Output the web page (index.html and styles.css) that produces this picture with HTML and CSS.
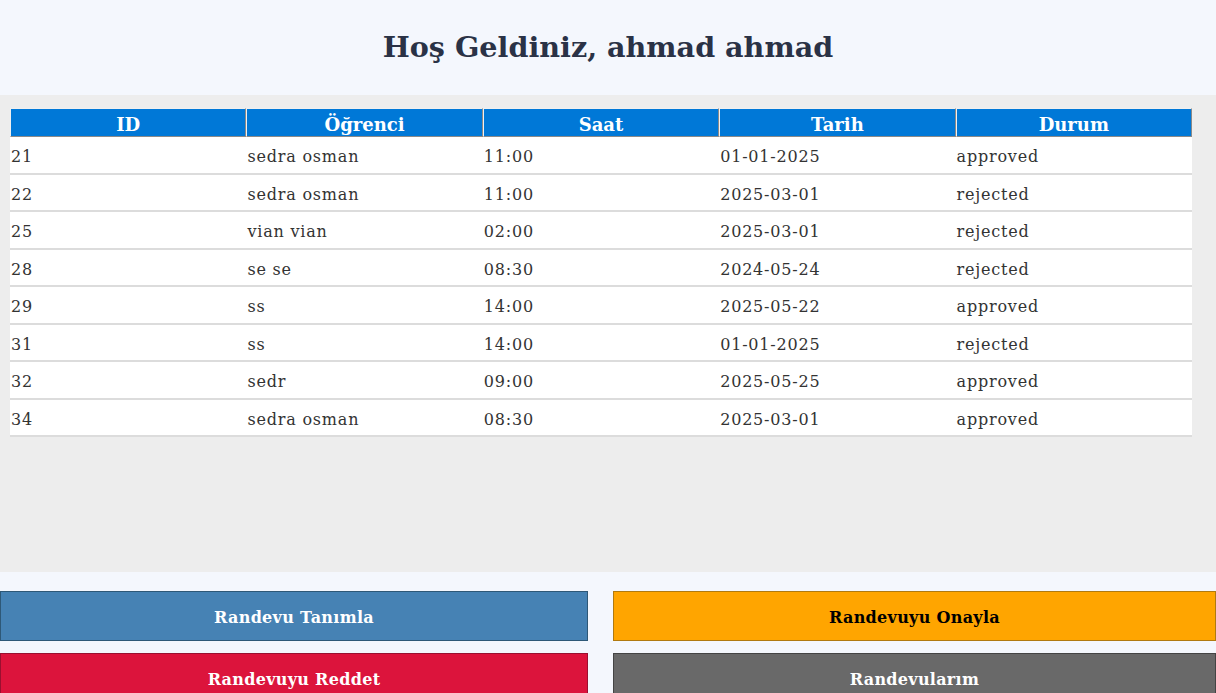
FILE: index.html
```html
<!DOCTYPE html>
<html lang="tr">
<head>
<meta charset="utf-8">
<title>Hoş Geldiniz</title>
<link rel="stylesheet" href="styles.css">
</head>
<body>
<header class="top">
  <h1 class="title">Hoş Geldiniz, ahmad ahmad</h1>
</header>
<main class="content">
  <table class="appts">
    <thead>
      <tr><th>ID</th><th>Öğrenci</th><th>Saat</th><th>Tarih</th><th>Durum</th></tr>
    </thead>
    <tbody>
      <tr><td>21</td><td>sedra osman</td><td>11:00</td><td>01-01-2025</td><td>approved</td></tr>
      <tr><td>22</td><td>sedra osman</td><td>11:00</td><td>2025-03-01</td><td>rejected</td></tr>
      <tr><td>25</td><td>vian vian</td><td>02:00</td><td>2025-03-01</td><td>rejected</td></tr>
      <tr><td>28</td><td>se se</td><td>08:30</td><td>2024-05-24</td><td>rejected</td></tr>
      <tr><td>29</td><td>ss</td><td>14:00</td><td>2025-05-22</td><td>approved</td></tr>
      <tr><td>31</td><td>ss</td><td>14:00</td><td>01-01-2025</td><td>rejected</td></tr>
      <tr><td>32</td><td>sedr</td><td>09:00</td><td>2025-05-25</td><td>approved</td></tr>
      <tr><td>34</td><td>sedra osman</td><td>08:30</td><td>2025-03-01</td><td>approved</td></tr>
    </tbody>
  </table>
</main>
<footer class="actions">
  <button class="btn btn-blue">Randevu Tanımla</button>
  <button class="btn btn-orange">Randevuyu Onayla</button>
  <button class="btn btn-red">Randevuyu Reddet</button>
  <button class="btn btn-gray">Randevularım</button>
</footer>
</body>
</html>
```
FILE: styles.css
```css
html, body {
  margin: 0;
  padding: 0;
}
body {
  background: #f4f7fd;
  font-family: "DejaVu Serif", serif;
  color: #333;
  overflow: hidden;
  width: 1216px;
}
.top {
  height: 95px;
  display: flex;
  align-items: center;
  justify-content: center;
  background: #f4f7fd;
}
.title {
  margin: 0;
  font-size: 28.6px;
  font-weight: bold;
  color: #2a3246;
  padding-bottom: 2px;
}
.content {
  background: #ededed;
  height: 477px;
  box-sizing: border-box;
  padding: 13px 24px 0 10px;
}
.appts {
  width: 100%;
  border-collapse: separate;
  border-spacing: 0;
  table-layout: fixed;
}
.appts th {
  background: #0078d7;
  color: #fff;
  font-size: 18px;
  font-weight: bold;
  line-height: 22px;
  height: 29px;
  padding: 5px 0 0;
  box-sizing: border-box;
  border: 1px solid;
  border-color: #f0f0f0 #8a8a8a #8a8a8a #f0f0f0;
}
.appts td {
  background: #fff;
  font-size: 16px;
  line-height: 19.5px;
  letter-spacing: 0.8px;
  padding: 10px 1px 6px;
  border-bottom: 2px solid #dcdcdc;
  color: #333;
}
.actions {
  display: grid;
  grid-template-columns: 588px 603px;
  gap: 12px 25px;
  padding-top: 19px;
}
.btn {
  height: 50px;
  font-family: "DejaVu Serif", serif;
  font-size: 16px;
  font-weight: bold;
  letter-spacing: 0.3px;
  color: #fff;
  border: 1px solid;
  padding: 2px 0 0;
}
.btn-blue { background: #4682b4; border-color: #2e5877; }
.btn-orange { background: #ffa500; border-color: #b07a10; color: #000; }
.btn-red { background: #dc143c; border-color: #9a1030; }
.btn-gray { background: #696969; border-color: #444; }
```
